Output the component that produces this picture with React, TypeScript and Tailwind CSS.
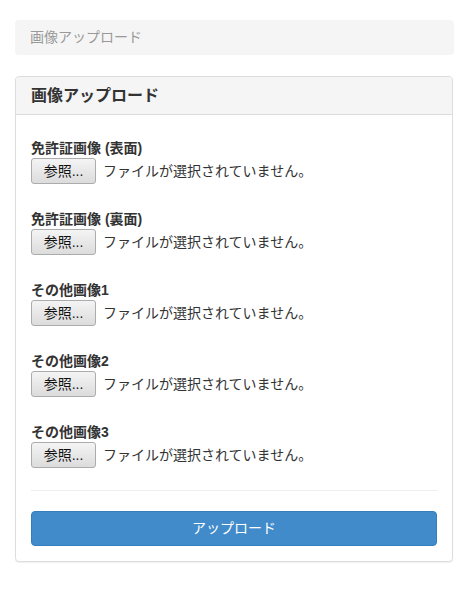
const fields = [
  "免許証画像 (表面)",
  "免許証画像 (裏面)",
  "その他画像1",
  "その他画像2",
  "その他画像3",
];

const FileField = ({ label }: { label: string }) => {
  return (
    <div className="flex flex-col">
      <label className="h-[20px] text-[14px] leading-[20px] font-bold text-[#333]">
        {label}
      </label>
      <div className="flex h-[27px] items-start">
        <button
          type="button"
          className="flex h-[26px] w-[65px] items-center justify-center rounded-[3px] border border-[#acacac] bg-gradient-to-b from-[#f4f4f4] to-[#dcdcdc] text-[14px] text-[#111]"
        >
          参照...
        </button>
        <span className="ml-[7px] flex h-[26px] items-center text-[14px] text-[#333]">
          ファイルが選択されていません。
        </span>
      </div>
    </div>
  );
};

export default function App() {
  return (
    <div
      className="min-h-[603px] w-[469px] bg-white px-[15px] pt-[20px]"
      style={{ fontFamily: '"Liberation Sans", "Noto Sans CJK JP", sans-serif' }}
    >
      <div className="flex h-[35px] items-center rounded-[4px] bg-[#f5f5f5] px-[15px] text-[14px] text-[#999]">
        画像アップロード
      </div>

      <div className="mt-[21px] w-[438px] rounded-[4px] border border-[#ddd] bg-white shadow-[0_1px_1px_rgba(0,0,0,0.06)]">
        <div className="rounded-t-[4px] border-b border-[#ddd] bg-[#f5f5f5] px-[15px] py-[10px] text-[16px] leading-[17px] font-bold text-[#333]">
          画像アップロード
        </div>
        <div className="px-[15px] pt-[23px] pb-[15px]">
          <div className="flex flex-col gap-[24px]">
            {fields.map((f) => (
              <FileField key={f} label={f} />
            ))}
          </div>
          <div className="mt-[21px] border-t border-[#eee]" />
          <button
            type="button"
            className="mt-[20px] flex h-[35px] w-full items-center justify-center rounded-[4px] border border-[#357ebd] bg-[#428bca] text-[14px] text-white"
          >
            アップロード
          </button>
        </div>
      </div>
    </div>
  );
}
